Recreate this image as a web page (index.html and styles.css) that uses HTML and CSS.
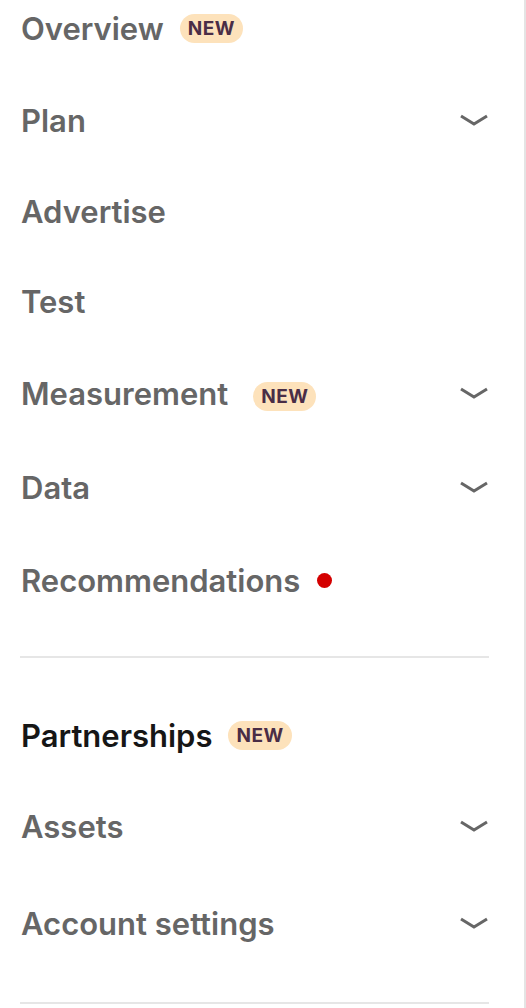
FILE: index.html
```html
<!DOCTYPE html>
<html>
<head>
<meta charset="utf-8">
<link rel="stylesheet" href="styles.css">
</head>
<body>
<nav class="sidebar">
  <ul class="menu menu-first">
    <li class="row"><span class="label">Overview</span><span class="badge">NEW</span></li>
    <li class="row"><span class="label">Plan</span><svg class="chev" viewBox="0 0 30 12"><path d="M2 2 L15 10 L28 2"/></svg></li>
    <li class="row row-short"><span class="label">Advertise</span></li>
    <li class="row row-short"><span class="label">Test</span></li>
    <li class="row row-tall"><span class="label">Measurement</span><span class="badge badge-wide">NEW</span><svg class="chev" viewBox="0 0 30 12"><path d="M2 2 L15 10 L28 2"/></svg></li>
    <li class="row row-tall"><span class="label">Data</span><svg class="chev" viewBox="0 0 30 12"><path d="M2 2 L15 10 L28 2"/></svg></li>
    <li class="row"><span class="label">Recommendations</span><span class="dot"></span></li>
  </ul>
  <hr class="divider">
  <ul class="menu menu-second">
    <li class="row"><span class="label label-active">Partnerships</span><span class="badge">NEW</span></li>
    <li class="row row-short"><span class="label">Assets</span><svg class="chev" viewBox="0 0 30 12"><path d="M2 2 L15 10 L28 2"/></svg></li>
    <li class="row row-gap"><span class="label">Account settings</span><svg class="chev" viewBox="0 0 30 12"><path d="M2 2 L15 10 L28 2"/></svg></li>
  </ul>
  <hr class="divider divider-last">
</nav>
</body>
</html>
```
FILE: styles.css
```css
html, body {
  margin: 0;
  padding: 0;
  background: #ffffff;
  height: 100%;
  overflow: hidden;
}
body {
  font-family: Inter, "Noto Sans", sans-serif;
  border-right: 2px solid #e4e4e4;
  box-sizing: border-box;
  width: 526px;
}
.sidebar {
  padding: 0 35px 0 20px;
}
.menu {
  list-style: none;
  margin: 0;
  padding: 0;
}
.menu-first {
  margin-top: -18px;
}
.row {
  height: 92px;
  display: flex;
  align-items: center;
  padding-left: 1px;
}
.row-short {
  height: 90px;
}
.row-tall {
  height: 94px;
}
.row-gap {
  margin-top: 6px;
}
.label {
  font-size: 31px;
  font-weight: 600;
  color: #666666;
  letter-spacing: 0;
}
.label-active {
  color: #161616;
}
.badge {
  margin-left: 16px;
  background: #fde2bb;
  color: #4a2d46;
  font-size: 19px;
  font-weight: 700;
  letter-spacing: 0.5px;
  height: 29px;
  line-height: 29px;
  padding: 0 8px;
  border-radius: 14.5px;
}
.badge-wide {
  margin-left: 25px;
  margin-top: 6px;
}
.dot {
  margin-left: 17px;
  width: 15px;
  height: 15px;
  border-radius: 50%;
  background: #d40000;
}
.chev {
  margin-left: auto;
  width: 30px;
  height: 12px;
  fill: none;
  stroke: #666666;
  stroke-width: 3;
  stroke-linejoin: miter;
}
.divider {
  border: 0;
  height: 2px;
  background: #e6e6e6;
  margin: 30px 0 31px 0;
}
.divider-last {
  margin-top: 33px;
}
```
